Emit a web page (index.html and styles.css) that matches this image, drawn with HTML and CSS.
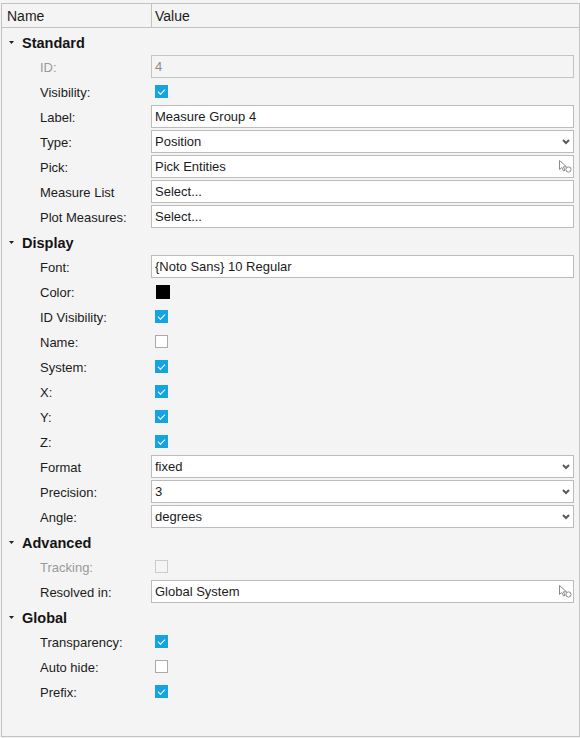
FILE: index.html
```html
<!DOCTYPE html>
<html>
<head>
<meta charset="utf-8">
<link rel="stylesheet" href="styles.css">
</head>
<body>
<div class="panel">
  <div class="head">
    <div class="hname">Name</div>
    <div class="hvalue">Value</div>
  </div>
  <div class="rows">
    <div class="sec"><svg class="tri" width="5" height="3" viewBox="0 0 5 3"><polygon points="0,0 5,0 2.5,3" fill="#222"/></svg><span>Standard</span></div>
    <div class="row"><div class="lbl dis">ID:</div><div class="val"><div class="inp disinp">4</div></div></div>
    <div class="row"><div class="lbl">Visibility:</div><div class="val"><span class="cb on"></span></div></div>
    <div class="row"><div class="lbl">Label:</div><div class="val"><div class="inp">Measure Group 4</div></div></div>
    <div class="row"><div class="lbl">Type:</div><div class="val"><div class="inp sel">Position<svg class="chev" width="8" height="6" viewBox="0 0 8 6"><polyline points="1,1 4,4 7,1" fill="none" stroke="#5a5a5a" stroke-width="2"/></svg></div></div></div>
    <div class="row"><div class="lbl">Pick:</div><div class="val"><div class="inp sel">Pick Entities<svg class="pick" width="14" height="14" viewBox="0 0 14 14"><path d="M1.5 1.5 L1.5 10.5 L3.8 8.4 L5.5 12 L7 11.3 L5.4 7.8 L8.5 7.8 Z" fill="#fff" stroke="#8a8a8a" stroke-width="1"/><circle cx="10.5" cy="10.5" r="2.6" fill="#fff" stroke="#8a8a8a" stroke-width="1"/></svg></div></div></div>
    <div class="row"><div class="lbl">Measure List</div><div class="val"><div class="inp">Select...</div></div></div>
    <div class="row"><div class="lbl">Plot Measures:</div><div class="val"><div class="inp">Select...</div></div></div>

    <div class="sec"><svg class="tri" width="5" height="3" viewBox="0 0 5 3"><polygon points="0,0 5,0 2.5,3" fill="#222"/></svg><span>Display</span></div>
    <div class="row"><div class="lbl">Font:</div><div class="val"><div class="inp">{Noto Sans} 10 Regular</div></div></div>
    <div class="row"><div class="lbl">Color:</div><div class="val"><span class="swatch"></span></div></div>
    <div class="row"><div class="lbl">ID Visibility:</div><div class="val"><span class="cb on"></span></div></div>
    <div class="row"><div class="lbl">Name:</div><div class="val"><span class="cb"></span></div></div>
    <div class="row"><div class="lbl">System:</div><div class="val"><span class="cb on"></span></div></div>
    <div class="row"><div class="lbl">X:</div><div class="val"><span class="cb on"></span></div></div>
    <div class="row"><div class="lbl">Y:</div><div class="val"><span class="cb on"></span></div></div>
    <div class="row"><div class="lbl">Z:</div><div class="val"><span class="cb on"></span></div></div>
    <div class="row"><div class="lbl">Format</div><div class="val"><div class="inp sel">fixed<svg class="chev" width="8" height="6" viewBox="0 0 8 6"><polyline points="1,1 4,4 7,1" fill="none" stroke="#5a5a5a" stroke-width="2"/></svg></div></div></div>
    <div class="row"><div class="lbl">Precision:</div><div class="val"><div class="inp sel">3<svg class="chev" width="8" height="6" viewBox="0 0 8 6"><polyline points="1,1 4,4 7,1" fill="none" stroke="#5a5a5a" stroke-width="2"/></svg></div></div></div>
    <div class="row"><div class="lbl">Angle:</div><div class="val"><div class="inp sel">degrees<svg class="chev" width="8" height="6" viewBox="0 0 8 6"><polyline points="1,1 4,4 7,1" fill="none" stroke="#5a5a5a" stroke-width="2"/></svg></div></div></div>

    <div class="sec"><svg class="tri" width="5" height="3" viewBox="0 0 5 3"><polygon points="0,0 5,0 2.5,3" fill="#222"/></svg><span>Advanced</span></div>
    <div class="row"><div class="lbl dis">Tracking:</div><div class="val"><span class="cb discb"></span></div></div>
    <div class="row"><div class="lbl">Resolved in:</div><div class="val"><div class="inp sel">Global System<svg class="pick" width="14" height="14" viewBox="0 0 14 14"><path d="M1.5 1.5 L1.5 10.5 L3.8 8.4 L5.5 12 L7 11.3 L5.4 7.8 L8.5 7.8 Z" fill="#fff" stroke="#8a8a8a" stroke-width="1"/><circle cx="10.5" cy="10.5" r="2.6" fill="#fff" stroke="#8a8a8a" stroke-width="1"/></svg></div></div></div>

    <div class="sec"><svg class="tri" width="5" height="3" viewBox="0 0 5 3"><polygon points="0,0 5,0 2.5,3" fill="#222"/></svg><span>Global</span></div>
    <div class="row"><div class="lbl">Transparency:</div><div class="val"><span class="cb on"></span></div></div>
    <div class="row"><div class="lbl">Auto hide:</div><div class="val"><span class="cb"></span></div></div>
    <div class="row"><div class="lbl">Prefix:</div><div class="val"><span class="cb on"></span></div></div>
  </div>
</div>
</body>
</html>
```
FILE: styles.css
```css
html, body {
  margin: 0;
  padding: 0;
  background: #f4f4f4;
}
body {
  font-family: "Liberation Sans", Arial, sans-serif;
  font-size: 13px;
  color: #1b1b1b;
}
.panel {
  box-sizing: border-box;
  margin: 3px 0 0 1px;
  width: 579px;
  height: 734px;
  border: 1px solid #c2c2c2;
  background: #f4f4f4;
}
.head {
  display: flex;
  height: 23px;
  border-bottom: 1px solid #c2c2c2;
  font-size: 14px;
  line-height: 25px;
}
.hname {
  box-sizing: border-box;
  width: 150px;
  padding-left: 5px;
  border-right: 1px solid #c2c2c2;
}
.hvalue {
  padding-left: 3px;
}
.rows {
  padding-top: 2px;
}
.row {
  display: grid;
  grid-template-columns: 149px 1fr;
  height: 25px;
}
.lbl {
  padding-left: 38px;
  line-height: 25px;
  white-space: nowrap;
}
.dis {
  color: #9a9a9a;
}
.val {
  position: relative;
}
.inp {
  box-sizing: border-box;
  width: 423px;
  height: 23px;
  border: 1px solid #bcbcbc;
  background: #fff;
  padding-left: 3px;
  line-height: 21px;
  position: relative;
  white-space: nowrap;
}
.disinp {
  background: #f4f4f4;
  color: #8c8c8c;
  border-color: #c4c4c4;
}
.chev {
  position: absolute;
  right: 3px;
  top: 8px;
}
.pick {
  position: absolute;
  right: 1px;
  top: 3px;
}
.cb {
  display: block;
  box-sizing: border-box;
  width: 13px;
  height: 13px;
  margin: 5px 0 0 4px;
  border: 1px solid #a9a9a9;
  background: #fff;
  position: relative;
}
.cb.on {
  border: none;
  background: #15a3e2;
}
.cb.on::after {
  content: "";
  position: absolute;
  left: 3px;
  top: 3.5px;
  width: 6px;
  height: 3px;
  border-left: 1.6px solid #fff;
  border-bottom: 1.6px solid #fff;
  transform: rotate(-45deg);
}
.cb.discb {
  border-color: #cbcbcb;
  background: #f4f4f4;
}
.swatch {
  display: block;
  width: 14px;
  height: 14px;
  margin: 5px 0 0 5px;
  background: #000;
}
.sec {
  display: flex;
  align-items: center;
  height: 25px;
  font-weight: bold;
  font-size: 14.5px;
  color: #141414;
}
.tri {
  margin-left: 7px;
  margin-right: 8px;
}
```
